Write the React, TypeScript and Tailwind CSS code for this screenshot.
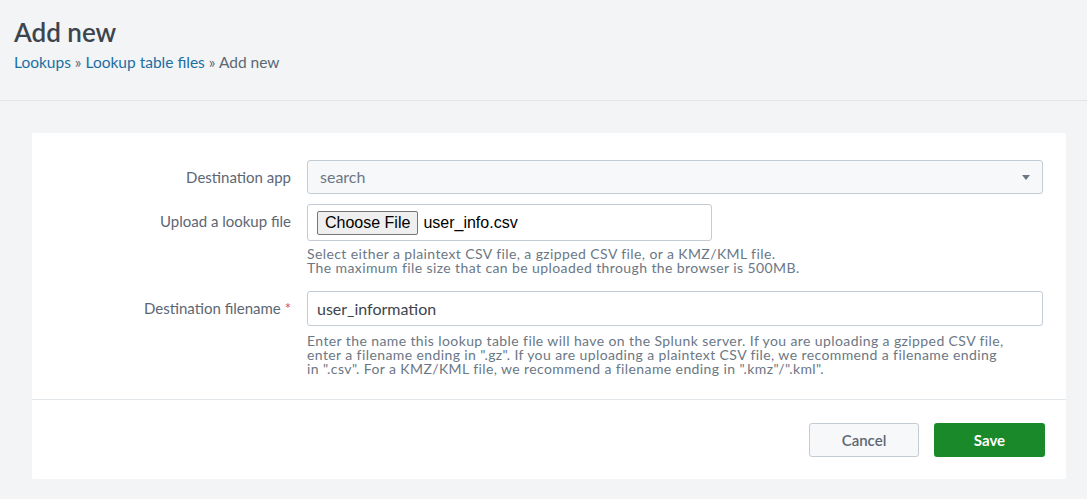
import React from 'react';

const font = { fontFamily: 'Lato, "Open Sans", sans-serif' };

const App: React.FC = () => {
  return (
    <div className="min-h-[499px] w-[1087px] bg-[#f2f4f5] text-[#3c444d]" style={font}>
      {/* Header */}
      <div className="h-[101px] border-b border-[#e1e6eb] px-[14px] pt-[15px]">
        <h1 className="text-[26px] font-semibold leading-[34px] text-[#3c444d]">Add new</h1>
        <div className="mt-[3px] text-[15.5px] leading-[20px] text-[#5c6773]">
          <a className="text-[#1a6fa3]">Lookups</a> » <a className="text-[#1a6fa3]">Lookup table files</a> » Add new
        </div>
      </div>

      {/* Card */}
      <div className="mx-[32px] mt-[32px] w-[1034px] rounded-[2px] bg-white">
        <div className="pt-[27px] pb-[23px]">
          {/* Destination app */}
          <div className="flex items-start">
            <label className="w-[275px] pt-[8px] pr-[16px] text-right text-[15px] leading-[18px] text-[#5c6773]">Destination app</label>
            <div className="flex h-[34px] w-[736px] items-center justify-between rounded-[3px] border border-[#c3cbd4] bg-[#f7f8fa] px-[12px] text-[16px] text-[#6b7785]">
              <span>search</span>
              <svg width="8" height="5" viewBox="0 0 8 5"><path d="M0 0h8L4 5z" fill="#6b7785" /></svg>
            </div>
          </div>

          {/* Upload */}
          <div className="mt-[10px] flex items-start">
            <label className="w-[275px] pt-[8px] pr-[16px] text-right text-[15px] leading-[18px] text-[#5c6773]">Upload a lookup file</label>
            <div>
              <div className="flex h-[37px] w-[405px] items-center rounded-[3px] border border-[#c3cbd4] bg-white pl-[9px]" style={{ fontFamily: '"Liberation Sans", Arial, sans-serif' }}>
                <button className="h-[24px] rounded-[2px] border border-[#767676] bg-[#efefef] px-[7px] text-[16px] leading-[20px] text-black">Choose File</button>
                <span className="ml-[5px] text-[16px] text-black">user_info.csv</span>
              </div>
              <p className="mt-[6px] text-[14px] leading-[14px] tracking-[0.4px] text-[#6b7785]">
                Select either a plaintext CSV file, a gzipped CSV file, or a KMZ/KML file.<br />
                The maximum file size that can be uploaded through the browser is 500MB.
              </p>
            </div>
          </div>

          {/* Destination filename */}
          <div className="mt-[16px] flex items-start">
            <label className="w-[275px] pt-[8px] pr-[16px] text-right text-[15px] leading-[18px] text-[#5c6773]">
              Destination filename <span className="text-[#dc4e41]">*</span>
            </label>
            <div>
              <div className="flex h-[35px] w-[736px] items-center rounded-[3px] border border-[#c3cbd4] bg-white px-[9px] text-[16px] text-[#3c444d]">
                user_information
              </div>
              <p className="mt-[8px] w-[736px] text-[14px] leading-[14px] tracking-[0.4px] text-[#6b7785]">
                Enter the name this lookup table file will have on the Splunk server. If you are uploading a gzipped CSV file,<br />
                enter a filename ending in ".gz". If you are uploading a plaintext CSV file, we recommend a filename ending<br />
                in ".csv". For a KMZ/KML file, we recommend a filename ending in ".kmz"/".kml".
              </p>
            </div>
          </div>
        </div>

        {/* Footer */}
        <div className="flex h-[80px] items-center justify-end gap-[15px] border-t border-[#e1e6eb] pr-[21px] pt-[1px]">
          <button className="h-[34px] w-[110px] rounded-[3px] border border-[#c3cbd4] bg-[#f7f8fa] text-[15px] font-semibold text-[#5c6773]">Cancel</button>
          <button className="h-[34px] w-[111px] rounded-[3px] bg-[#1a8929] text-[15px] font-bold text-white">Save</button>
        </div>
      </div>
    </div>
  );
};

export default App;
